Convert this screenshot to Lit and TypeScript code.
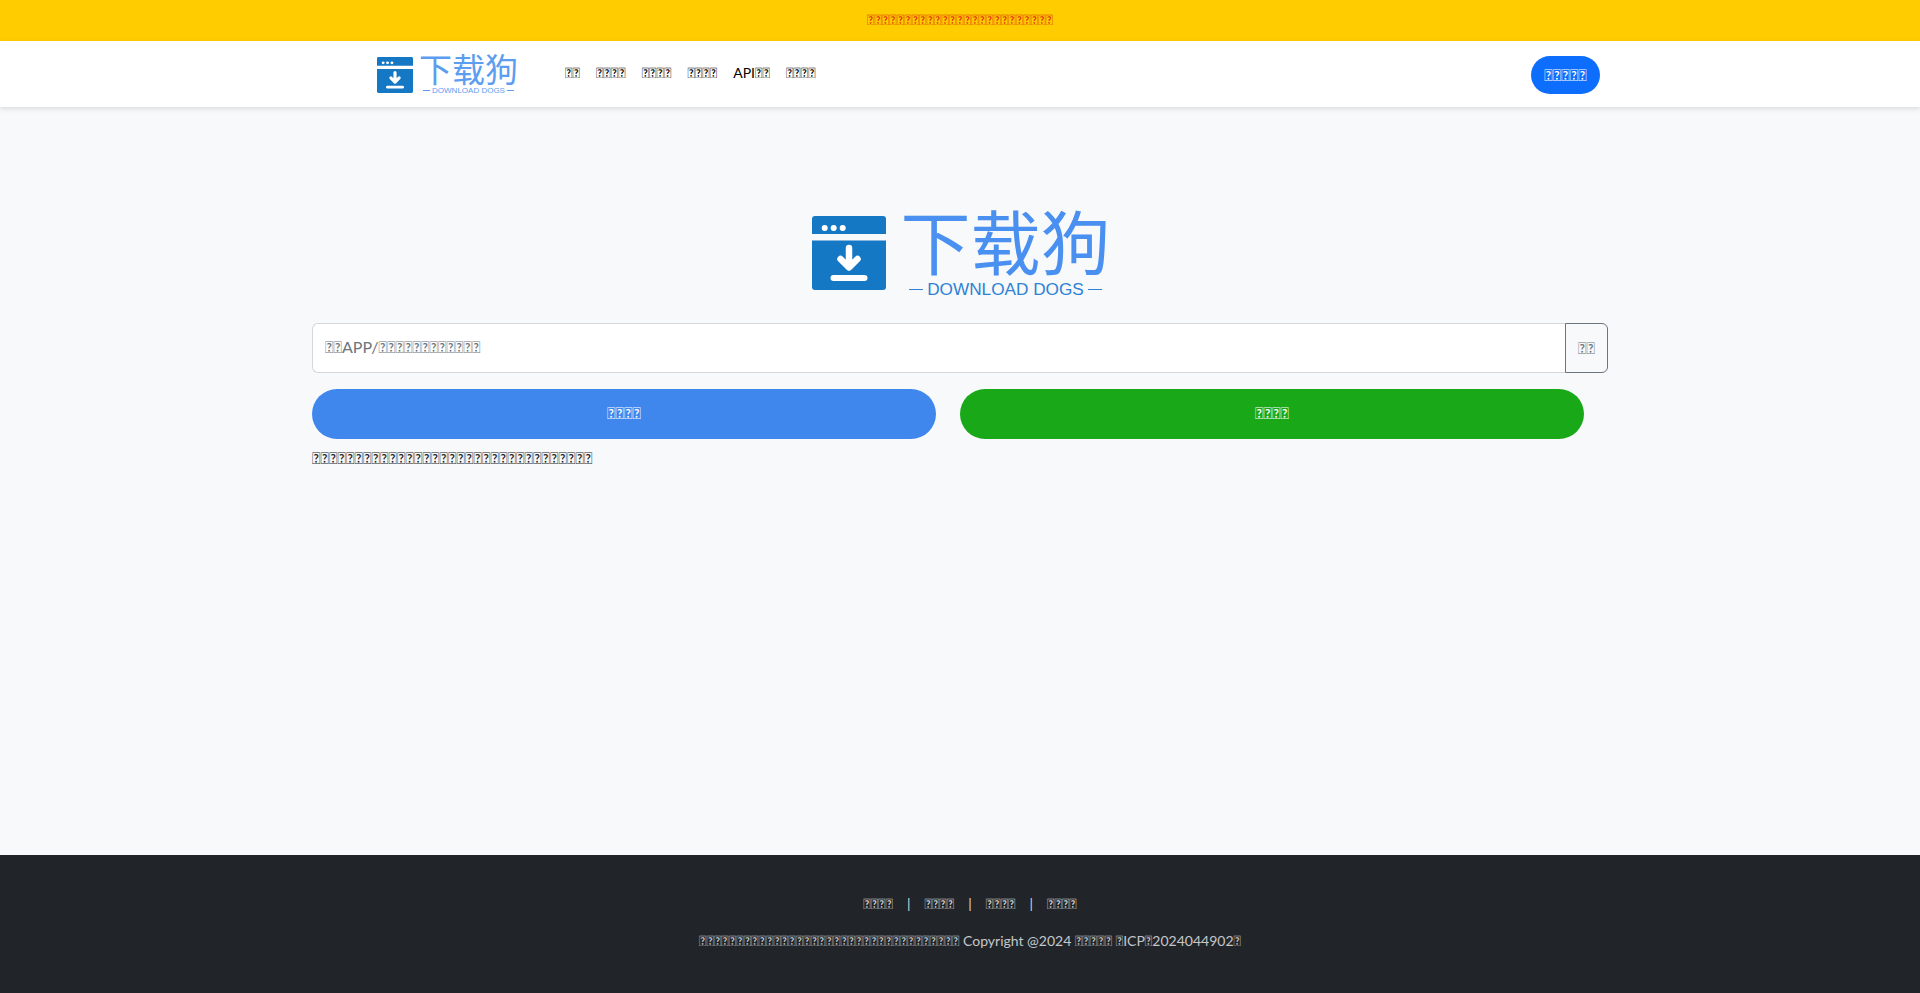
import { LitElement, html, css } from "lit";
import { customElement } from "lit/decorators.js";

// The reference shows its Chinese copy as missing-glyph boxes, so the wording cannot be read.
// Private-use U+E000 reproduces those boxes without inventing any wording.
const box = (n: number) => "\uE000".repeat(n);

const windowIcon = html`<svg class="mark" viewBox="0 0 74 74" aria-hidden="true">
  <path fill="#1478c4" d="M3 0h68a3 3 0 0 1 3 3v15H0V3a3 3 0 0 1 3-3z"/>
  <path fill="#1478c4" d="M0 24.500h74V71a3 3 0 0 1-3 3H3a3 3 0 0 1-3-3z"/>
  <circle cx="12.700" cy="12" r="3" fill="#fff"/><circle cx="21.700" cy="12" r="3" fill="#fff"/><circle cx="30.700" cy="12" r="3" fill="#fff"/>
  <path fill="none" stroke="#fff" stroke-width="6.500" stroke-linecap="round" stroke-linejoin="round" d="M37 32v19M28.500 43l8.500 8.500 8.500-8.500"/>
  <path fill="none" stroke="#fff" stroke-width="6" stroke-linecap="round" d="M21.500 62h31"/>
</svg>`;

const wordmark = html`<span class="word"><b>下载狗</b><span class="sub">DOWNLOAD DOGS</span></span>`;

@customElement("app-root")
class AppRoot extends LitElement {
  static styles = css`
    :host { display: flex; flex-direction: column; min-height: 100vh; font-family: Lato, "Liberation Sans", sans-serif; font-size: 14px; color: #212529; background: #f8f9fa; }
    a { color: inherit; text-decoration: none; }
    .notice { height: 41px; box-sizing: border-box; padding-bottom: 2px; display: flex; align-items: center; justify-content: center; background: #ffcc00; color: #e0300c; font-size: 14px; }
    .nav { height: 66px; display: flex; align-items: center; background: #fff; padding: 0 320px 0 377px; box-shadow: 0 2px 5px rgba(0,0,0,.12); position: relative; }
    .brand { display: flex; align-items: center; gap: 6px; margin-right: 47px; }
    .brand .mark { width: 36px; height: 36px; margin-top: 2px; }
    .word { display: flex; flex-direction: column; align-items: center; font-family: "Noto Sans CJK SC", sans-serif; white-space: nowrap; }
    .word b { font-weight: 400; line-height: 1; }
    .sub { display: flex; align-items: center; font-family: "Liberation Sans", sans-serif; white-space: nowrap; }
    .sub::before, .sub::after { content: ""; display: block; background: currentColor; }
    .brand .word { width: 99px; color: #5c9df0; }
    .brand .word b { font-size: 33px; height: 33px; margin-top: -2px; }
    .brand .sub { font-size: 8px; margin-top: 1px; gap: 2px; }
    .brand .sub::before, .brand .sub::after { width: 7px; height: 1px; }
    .links { display: flex; gap: 16px; color: #000; font-size: 14px; flex: 1; margin-top: -3px; }
    .cta { width: 69px; height: 38px; margin-top: 1px; border-radius: 19px; border: 0; background: #0d6efd; color: #fff; font: inherit; font-size: 16px; padding: 0 0 1px; }
    main { flex: 1; padding: 100px 312px 0; display: flex; flex-direction: column; }
    .hero { display: flex; align-items: center; justify-content: center; gap: 17px; height: 116px; }
    .hero .mark { width: 74px; height: 74px; margin-top: -24px; }
    .hero .word { width: 205px; margin-top: -25px; color: #4a90f0; }
    .hero .word b { font-size: 70px; height: 70px; }
    .hero .sub { font-size: 17.200px; color: #2d82d6; margin-top: 4px; gap: 4px; }
    .hero .sub::before, .hero .sub::after { width: 14px; height: 1.500px; }
    .search { display: flex; height: 50px; }
    input { flex: 1; min-width: 0; box-sizing: border-box; border: 1px solid #d4d7da; border-right: 0; border-radius: 6px 0 0 6px; background: #fff; padding: 0 12px 3px; font: inherit; font-size: 16px; color: #212529; outline: none; }
    input::placeholder { color: #6c757d; opacity: 1; }
    .go { width: 43px; border: 1px solid #6c757d; border-radius: 0 6px 6px 0; background: transparent; color: #6c757d; font: inherit; font-size: 16px; padding: 0 0 2px; }
    .actions { display: grid; grid-template-columns: 1fr 1fr; margin-top: 16px; }
    .actions button { width: 624px; height: 50px; border: 0; border-radius: 25px; color: #fff; font: inherit; font-size: 16px; padding: 0 0 3px; }
    .blue { background: #3f86ed; }
    .green { background: #18a818; }
    .note { margin: 7px 0 0; font-size: 16px; line-height: 24px; color: #212529; }
    footer { height: 138px; background: #212529; color: #d5d7d9; display: flex; flex-direction: column; align-items: center; padding: 38px 0 0 20px; box-sizing: border-box; }
    .flinks { display: flex; gap: 14px; line-height: 21px; font-size: 14px; }
    .copy { margin: 16px 0 0; line-height: 21px; font-size: 14px; color: #c5c7c9; }
  `;

  render() {
    return html`
      <div class="notice">${box(25)}</div>
      <header class="nav">
        <a class="brand" href="#">${windowIcon}${wordmark}</a>
        <nav class="links">
          <a href="#">${box(2)}</a><a href="#">${box(4)}</a><a href="#">${box(4)}</a><a href="#">${box(4)}</a><a href="#">API${box(2)}</a><a href="#">${box(4)}</a>
        </nav>
        <button class="cta">${box(5)}</button>
      </header>
      <main>
        <div class="hero">${windowIcon}${wordmark}</div>
        <div class="search">
          <input placeholder="${box(2)}APP/${box(12)}" />
          <button class="go">${box(2)}</button>
        </div>
        <div class="actions">
          <button class="blue">${box(4)}</button>
          <button class="green">${box(4)}</button>
        </div>
        <p class="note">${box(33)}</p>
      </main>
      <footer>
        <div class="flinks">
          <a href="#">${box(4)}</a><span>|</span><a href="#">${box(4)}</a><span>|</span><a href="#">${box(4)}</a><span>|</span><a href="#">${box(4)}</a>
        </div>
        <p class="copy">${box(35)} Copyright @2024 ${box(5)} ${box(1)}ICP${box(1)}2024044902${box(1)}</p>
      </footer>
    `;
  }
}
